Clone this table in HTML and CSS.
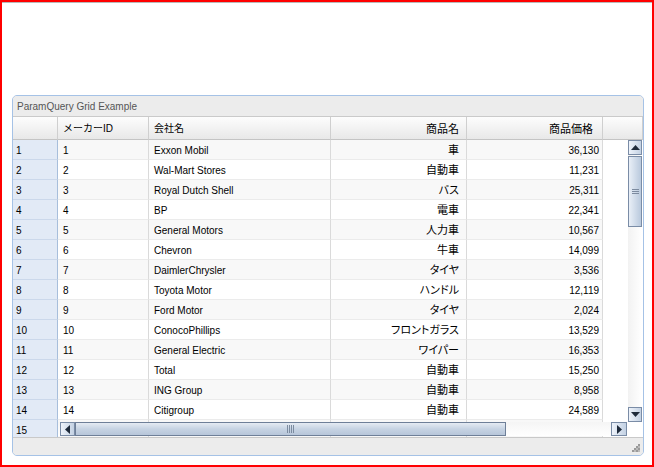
FILE: index.html
```html
<!DOCTYPE html>
<html>
<head>
<meta charset="utf-8">
<link rel="stylesheet" href="styles.css">
</head>
<body>
<div class="frame">
  <div class="topline"></div>
  <div class="grid">
    <div class="title">ParamQuery Grid Example</div>
    <div class="gbody">
      <div class="row head">
        <div class="c num"></div>
        <div class="c">メーカーID</div>
        <div class="c">会社名</div>
        <div class="c r jp">商品名</div>
        <div class="c r hp">商品価格</div>
        <div class="c last"></div>
      </div>
      <div class="row odd"><div class="c num">1</div><div class="c">1</div><div class="c">Exxon Mobil</div><div class="c r jp">車</div><div class="c r pr">36,130</div><div class="c last"></div></div>
      <div class="row"><div class="c num">2</div><div class="c">2</div><div class="c">Wal-Mart Stores</div><div class="c r jp">自動車</div><div class="c r pr">11,231</div><div class="c last"></div></div>
      <div class="row odd"><div class="c num">3</div><div class="c">3</div><div class="c">Royal Dutch Shell</div><div class="c r jp">バス</div><div class="c r pr">25,311</div><div class="c last"></div></div>
      <div class="row"><div class="c num">4</div><div class="c">4</div><div class="c">BP</div><div class="c r jp">電車</div><div class="c r pr">22,341</div><div class="c last"></div></div>
      <div class="row odd"><div class="c num">5</div><div class="c">5</div><div class="c">General Motors</div><div class="c r jp">人力車</div><div class="c r pr">10,567</div><div class="c last"></div></div>
      <div class="row"><div class="c num">6</div><div class="c">6</div><div class="c">Chevron</div><div class="c r jp">牛車</div><div class="c r pr">14,099</div><div class="c last"></div></div>
      <div class="row odd"><div class="c num">7</div><div class="c">7</div><div class="c">DaimlerChrysler</div><div class="c r jp">タイヤ</div><div class="c r pr">3,536</div><div class="c last"></div></div>
      <div class="row"><div class="c num">8</div><div class="c">8</div><div class="c">Toyota Motor</div><div class="c r jp">ハンドル</div><div class="c r pr">12,119</div><div class="c last"></div></div>
      <div class="row odd"><div class="c num">9</div><div class="c">9</div><div class="c">Ford Motor</div><div class="c r jp">タイヤ</div><div class="c r pr">2,024</div><div class="c last"></div></div>
      <div class="row"><div class="c num">10</div><div class="c">10</div><div class="c">ConocoPhillips</div><div class="c r jp">フロントガラス</div><div class="c r pr">13,529</div><div class="c last"></div></div>
      <div class="row odd"><div class="c num">11</div><div class="c">11</div><div class="c">General Electric</div><div class="c r jp">ワイパー</div><div class="c r pr">16,353</div><div class="c last"></div></div>
      <div class="row"><div class="c num">12</div><div class="c">12</div><div class="c">Total</div><div class="c r jp">自動車</div><div class="c r pr">15,250</div><div class="c last"></div></div>
      <div class="row odd"><div class="c num">13</div><div class="c">13</div><div class="c">ING Group</div><div class="c r jp">自動車</div><div class="c r pr">8,958</div><div class="c last"></div></div>
      <div class="row"><div class="c num">14</div><div class="c">14</div><div class="c">Citigroup</div><div class="c r jp">自動車</div><div class="c r pr">24,589</div><div class="c last"></div></div>
      <div class="row odd"><div class="c num">15</div><div class="c">15</div><div class="c">Wells Fargo</div><div class="c r jp">自動車</div><div class="c r pr">9,000</div><div class="c last"></div></div>

      <div class="vscroll">
        <div class="sbtn vbtn"><svg width="9" height="5" viewBox="0 0 9 5"><path d="M0 5 L4.5 0 L9 5 Z" fill="#1e2a3a"/></svg></div>
        <div class="vtrack">
          <div class="vthumb"><span></span><span></span><span></span></div>
        </div>
        <div class="sbtn vbtn"><svg width="9" height="5" viewBox="0 0 9 5"><path d="M0 0 L4.5 5 L9 0 Z" fill="#1e2a3a"/></svg></div>
      </div>
      <div class="hscroll">
        <div class="sbtn hbtn"><svg width="5" height="9" viewBox="0 0 5 9"><path d="M5 0 L0 4.5 L5 9 Z" fill="#1e2a3a"/></svg></div>
        <div class="htrack">
          <div class="hthumb"><span></span><span></span><span></span><span></span></div>
        </div>
        <div class="sbtn hbtn"><svg width="5" height="9" viewBox="0 0 5 9"><path d="M0 0 L5 4.5 L0 9 Z" fill="#1e2a3a"/></svg></div>
      </div>
    </div>
    <div class="footer">
      <svg class="grip" width="8" height="8" viewBox="0 0 8 8">
        <rect x="6" y="0" width="2" height="2" fill="#999"/>
        <rect x="4" y="2" width="2" height="2" fill="#999"/>
        <rect x="6" y="2" width="2" height="2" fill="#bbb"/>
        <rect x="2" y="4" width="2" height="2" fill="#999"/>
        <rect x="4" y="4" width="2" height="2" fill="#bbb"/>
        <rect x="6" y="4" width="2" height="2" fill="#999"/>
        <rect x="0" y="6" width="2" height="2" fill="#999"/>
        <rect x="2" y="6" width="2" height="2" fill="#bbb"/>
        <rect x="4" y="6" width="2" height="2" fill="#999"/>
        <rect x="6" y="6" width="2" height="2" fill="#bbb"/>
      </svg>
    </div>
  </div>
</div>
</body>
</html>
```
FILE: styles.css
```css
* { box-sizing: border-box; }
html, body { margin: 0; padding: 0; background: #fff; }
body {
  font-family: "Liberation Sans", "Noto Sans CJK JP", sans-serif;
  font-size: 10px;
  color: #000;
}
.frame {
  width: 654px;
  height: 467px;
  border: 2px solid #ff0000;
  overflow: hidden;
}
.topline {
  height: 1px;
  background: #b9b9b9;
}
.grid {
  margin: 92px 0 0 10px;
  width: 632px;
  height: 361px;
  border: 1px solid #a5c2e6;
  border-radius: 5px;
  overflow: hidden;
  background: #ececec;
  display: flex;
  flex-direction: column;
}
.title {
  height: 21px;
  line-height: 22px;
  padding-left: 4px;
  color: #555;
  border-bottom: 1px solid #cacaca;
  background: #ececec;
}
.gbody {
  position: relative;
  height: 320px;
  overflow: hidden;
  background: #fff;
}
.row {
  display: grid;
  grid-template-columns: 45px 91px 182px 136px 136px 1fr;
  height: 20px;
}
.row .c {
  border-right: 1px solid #dadada;
  border-bottom: 1px solid #ebebeb;
  padding: 1px 5px 0;
  line-height: 19px;
  white-space: nowrap;
  overflow: hidden;
}
.row.odd .c { background: #f8f8f8; }
.row .c.num {
  background: #e2eaf6;
  border-right: 1px solid #a7bedb;
  border-bottom: 1px solid #cbd8eb;
  padding-left: 3px;
}
.row .c.last { border-right: none; border-bottom: none; background: #fff; }
.row.odd .c.last { background: #fff; }
.row .c.r { text-align: right; padding-right: 7px; }
.row .c.pr { padding-right: 3px; }
.row .c.jp { font-size: 11px; font-feature-settings: "palt"; }
.row.head { height: 23px; }
.row.head .c,
.row.head .c.num,
.row.head .c.last {
  background: linear-gradient(#fdfdfd, #e8e8e8);
  border-right: 1px solid #cfcfcf;
  border-bottom: 1px solid #c4c4c4;
  line-height: 22px;
}
.row.head .c.num { border-right: 1px solid #cfcfcf; }
.row.head .c.hp { padding-right: 9px; font-size: 11px; font-feature-settings: "palt"; }

.sbtn {
  display: flex;
  align-items: center;
  justify-content: center;
  border: 1px solid #7a8ca6;
  background: linear-gradient(90deg, #eef3fa, #c3d1e3);
}
.vscroll {
  position: absolute;
  right: 1px;
  top: 23px;
  width: 14px;
  height: 282px;
  display: flex;
  flex-direction: column;
  background: linear-gradient(90deg, #f2f2f2, #fff);
}
.vbtn { height: 15px; }
.vtrack { flex: 1; padding-top: 1px; }
.vthumb {
  height: 71px;
  border: 1px solid #7a8ca6;
  background: linear-gradient(90deg, #e9eff7, #b9c9dd);
  display: flex;
  flex-direction: column;
  align-items: center;
  justify-content: center;
  gap: 1px;
}
.vthumb span { width: 7px; height: 1px; background: #7c8ba0; }
.hscroll {
  position: absolute;
  left: 45px;
  right: 16px;
  top: 305px;
  height: 14px;
  display: flex;
  background: linear-gradient(#f5f5f5, #fff);
}
.hbtn { width: 16px; }
.hbtn:first-child { margin-left: 2px; width: 15px; }
.htrack { flex: 1; }
.hthumb {
  width: 431px;
  height: 100%;
  border: 1px solid #6e7f98;
  background: linear-gradient(#e5ebf3, #c6d3e3 50%, #b7c6da);
  display: flex;
  align-items: center;
  justify-content: center;
  gap: 1px;
}
.hthumb span { width: 1px; height: 8px; background: #7c8ba0; }
.footer {
  flex: 1;
  border-top: 1px solid #c9c9c9;
  background: #ececec;
  display: flex;
  justify-content: flex-end;
  align-items: flex-end;
  padding: 0 3px 3px 0;
}
```
